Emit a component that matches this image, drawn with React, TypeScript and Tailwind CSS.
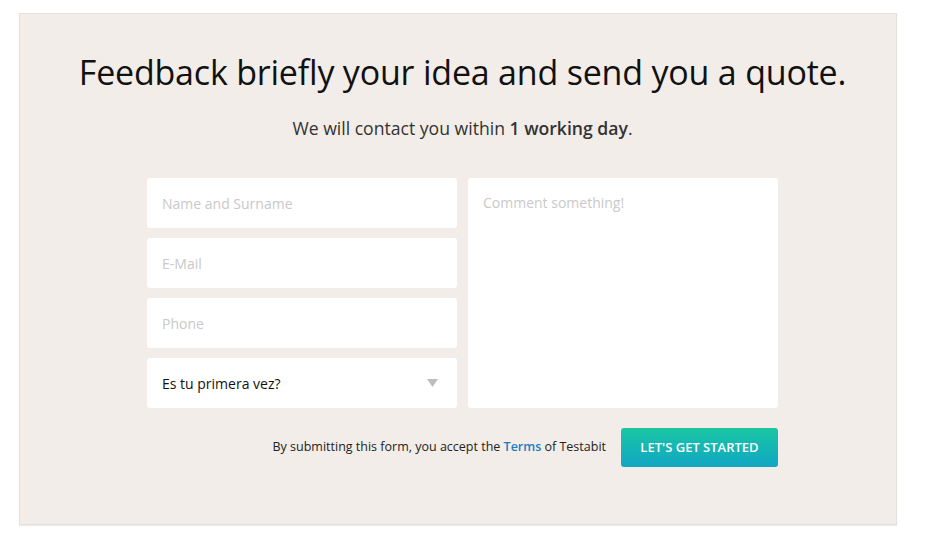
import React from 'react';

export default function App() {
  return (
    <div className="w-[928px] h-[544px] bg-white pt-[13px] pl-[19px]" style={{ fontFamily: '"Open Sans", "Noto Sans", sans-serif' }}>
      <div className="w-[878px] h-[512px] pl-[9px] bg-[#f2ede8] border border-[#e4e0dc] shadow-[0_1px_1px_rgba(0,0,0,0.08)] flex flex-col items-center">
        <h1 className="mt-[36px] text-[34px] leading-[44px] text-[#111] tracking-[-0.2px]">
          Feedback briefly your idea and send you a quote.
        </h1>
        <p className="mt-[22px] text-[17.6px] leading-[24px] text-[#333]">
          We will contact you within <span className="font-semibold">1 working day</span>.
        </p>

        <div className="mt-[38px] flex gap-[11px]">
          <div className="flex flex-col gap-[10px] w-[310px]">
            <input
              className="h-[50px] bg-white rounded-[3px] px-[15px] text-[14px] text-[#333] placeholder:text-[#c9c9c9] outline-none"
              placeholder="Name and Surname"
            />
            <input
              className="h-[50px] bg-white rounded-[3px] px-[15px] text-[14px] text-[#333] placeholder:text-[#c9c9c9] outline-none"
              placeholder="E-Mail"
            />
            <input
              className="h-[50px] bg-white rounded-[3px] px-[15px] text-[14px] text-[#333] placeholder:text-[#c9c9c9] outline-none"
              placeholder="Phone"
            />
            <div className="h-[50px] bg-white rounded-[3px] px-[15px] flex items-center justify-between">
              <span className="text-[14px] text-[#111]">Es tu primera vez?</span>
              <svg width="11" height="8" viewBox="0 0 11 8" className="mr-[4px]">
                <path d="M0 0 L11 0 L5.5 8 Z" fill="#bdbdbd" />
              </svg>
            </div>
          </div>
          <textarea
            className="w-[310px] h-[230px] bg-white rounded-[3px] px-[15px] py-[15px] text-[14px] leading-[20px] text-[#333] placeholder:text-[#c9c9c9] outline-none resize-none"
            placeholder="Comment something!"
          />
        </div>

        <div className="mt-[20px] w-[631px] flex items-center justify-end gap-[15px]">
          <p className="text-[12.5px] text-[#222]">
            By submitting this form, you accept the <a className="text-[#1a7fc1] font-semibold">Terms</a> of Testabit
          </p>
          <button className="w-[157px] h-[39px] rounded-[3px] bg-gradient-to-b from-[#1cc6a2] to-[#13a6c3] text-white text-[13px] font-semibold uppercase">
            Let's get started
          </button>
        </div>
      </div>
    </div>
  );
}
